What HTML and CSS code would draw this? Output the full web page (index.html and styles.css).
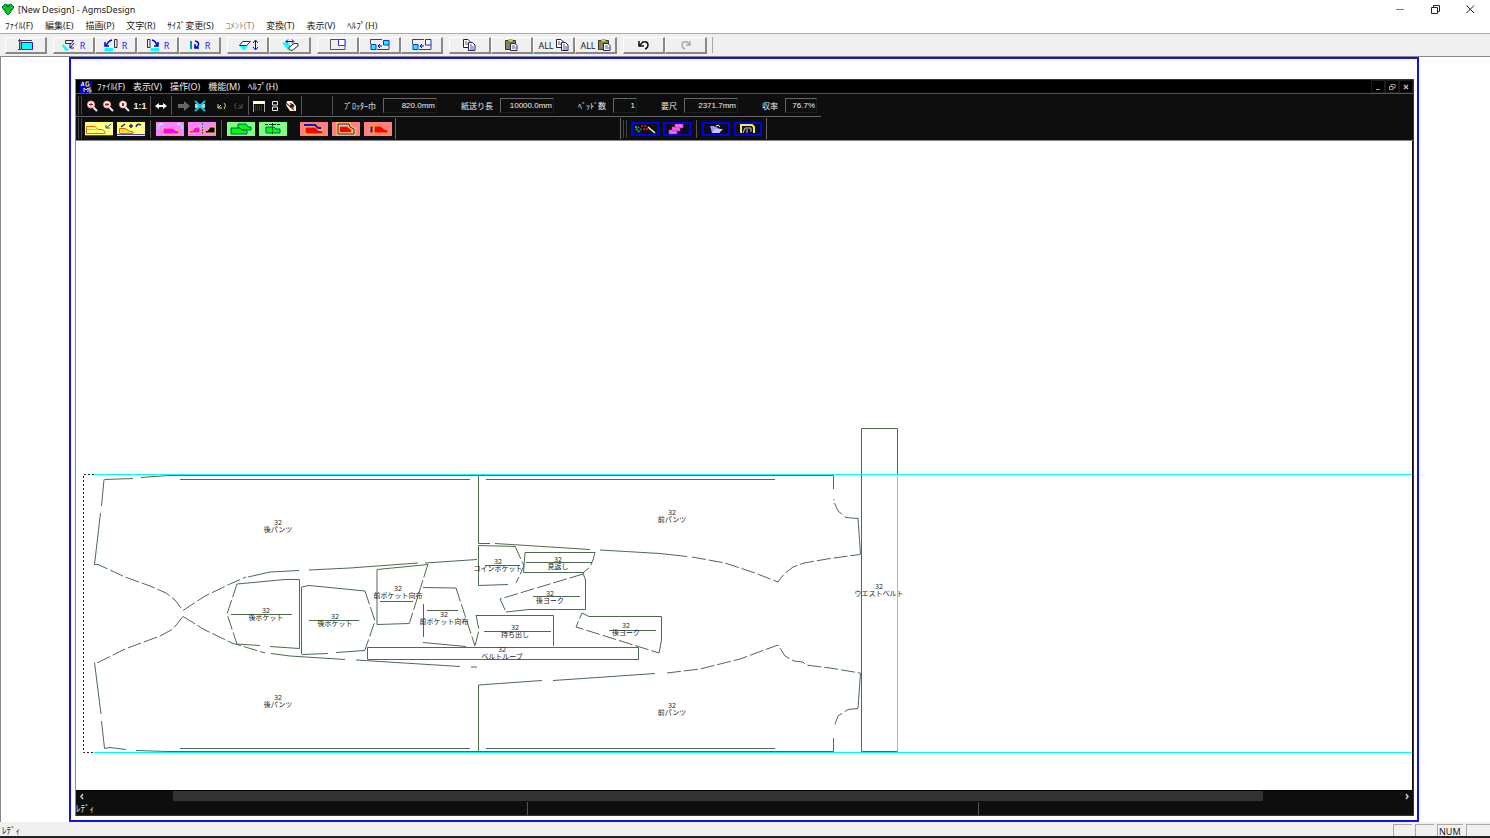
FILE: index.html
```
<!DOCTYPE html>
<html lang="ja">
<head>
  <meta charset="UTF-8" />
  <title>[New Design] - AgmsDesign</title>
  <link rel="stylesheet" href="styles.css">
</head>
<body>
  <header class="titlebar">
    <svg class="app-icon" width="12" height="12" viewBox="0 0 12 12"><path d="M3 1L5 2H7L9 1L12 4L10 7L9 6V9L6 12L3 9V6L2 7L0 4Z" fill="#0c2" stroke="#063" /><path d="M4 2L6 4L8 2" fill="none" stroke="#033" /></svg>
    <h1>[New Design] - AgmsDesign</h1>
    <div class="window-controls">
      <button aria-label="Minimize"><svg width="9" height="9"><path d="M0 4.500H8" stroke="#777" /></svg></button>
      <button aria-label="Restore"><svg width="9" height="9" fill="none" stroke="#222"><path d="M.5 2.500H6.500V8.500H.5ZM2.500 2V.5H8.500V6.500H7" /></svg></button>
      <button aria-label="Close"><svg width="9" height="9"><path d="M.5 .5L8 8M8 .5L.5 8" stroke="#222" /></svg></button>
    </div>
  </header>

  <nav class="menu">
    <button>ﾌｧｲﾙ(F)</button>
    <button>編集(E)</button>
    <button>描画(P)</button>
    <button>文字(R)</button>
    <button>ｻｲｽﾞ変更(S)</button>
    <button disabled>ｺﾒﾝﾄ(T)</button>
    <button>変換(T)</button>
    <button>表示(V)</button>
    <button>ﾍﾙﾌﾟ(H)</button>
  </nav>

  <div class="toolbar">
    <div class="group">
      <button aria-label="Select"><svg width="16" height="12"><path d="M3.500 3.500H14.500V10.500H3.500Z" fill="#0ff" stroke="#22a" /><path d="M1.500 0V11M0 1.500H14M3 1.500V10M0 10.500H3" fill="none" stroke="#444" /></svg></button>
    </div>
    <div class="group">
      <button aria-label="Rotate piece"><svg width="14" height="12"><path d="M3.500 1.500H11.500L9.500 4.500H3.500Z" fill="none" stroke="#333" /><path d="M1 5L7 11L4 12L0 7Z" fill="#0ff" /><path d="M12 4L8 9M8 5V9H12" fill="none" stroke="#00d" /></svg><span class="r">R</span></button>
      <button aria-label="Rotate left"><svg width="14" height="12"><path d="M10.500 .5H13V8.500H10.500Z" fill="none" stroke="#333" /><path d="M1 9H9V12H0Z" fill="#0ff" /><path d="M8 1Q4 2 2 7M1 3V7H5" fill="none" stroke="#00d" stroke-width="1.500" /></svg><span class="r">R</span></button>
      <button aria-label="Rotate right"><svg width="14" height="12"><path d="M1.500 .5H4V8.500H1.500Z" fill="none" stroke="#333" /><path d="M5 9H13V12H4Z" fill="#0ff" /><path d="M6 1Q10 2 11 7M8 7H12V3" fill="none" stroke="#00d" stroke-width="1.500" /></svg><span class="r">R</span></button>
      <button aria-label="Rotate 180"><svg width="12" height="12"><path d="M1 2H3V10H1Z" fill="#099" /><path d="M6 2Q11 3 9 7L6 9M6 5V9H10" fill="none" stroke="#00d" stroke-width="1.500" /></svg><span class="r">R</span></button>
    </div>
    <div class="group">
      <button aria-label="Flip vertical"><svg width="20" height="12"><path d="M1 6H10L7 11H5Z" fill="#0ff" /><path d="M4.500 2.500H12.500L8.500 6.500H1.500Z" fill="#fff" stroke="#333" /><path d="M17.500 2V10M15 4L17.500 1L20 4M15 8L17.500 11L20 8" fill="none" stroke="#00d" /></svg></button>
      <button aria-label="Flip horizontal"><svg width="18" height="12"><path d="M1 4L5 3L11 8L7 11Z" fill="#0ff" /><path d="M8 8.500L13 4.500H17V7L11 11.500L8 10.500Z" fill="#fff" stroke="#333" /><path d="M5 2.500H12M7 .5L5 2.500L7 4.500M11 .5L13 2.500L11 4.500" fill="none" stroke="#00d" /></svg></button>
    </div>
    <div class="group">
      <button aria-label="Zoom frame"><svg width="16" height="12" fill="none"><path d="M.5 .5H15V10.500H.5Z" stroke="#555" /><path d="M8.500 .5H15V6.500H8.500Z" stroke="#33e" fill="#fff" /></svg></button>
      <button aria-label="Move in"><svg width="20" height="12"><path d="M.5 .5H12M.5 .5V5M7 10.500H19V6" fill="none" stroke="#444" /><path d="M1 5.500H6V10.500H1Z" fill="#0ff" stroke="#22d" /><path d="M13.500 1.500H19V6H13.500Z" fill="#0ff" stroke="#22d" /><path d="M8 7H12M10 5L8 7L10 9" fill="none" stroke="#00d" /></svg></button>
      <button aria-label="Move out"><svg width="20" height="12"><path d="M.5 .5H12M.5 .5V5M7 10.500H19V6" fill="none" stroke="#444" /><path d="M1 5.500H6V10.500H1Z" fill="#0ff" stroke="#22d" /><path d="M13.500 .5H19V6H13.500Z" fill="#fff" stroke="#22d" /><path d="M8 7H12M10 5L8 7L10 9" fill="none" stroke="#00d" /></svg></button>
    </div>
    <svg width="0" height="0" class="defs">
      <symbol id="copy" viewBox="0 0 13 12"><path d="M.5 .5H5L7.500 3V8.500H.5Z" fill="#fff" stroke="#222" /><path d="M2 3H4M2 5H6" stroke="#555" /><path d="M5.500 3.500H9.500L12 6V11.500H5.500Z" fill="#fff" stroke="#226" /><path d="M7 6H9M7 8H11M7 10H11" stroke="#558" /></symbol>
      <symbol id="paste" viewBox="0 0 13 12"><path d="M.5 1.500H10.500V10.500H.5Z" fill="#885" stroke="#333" /><path d="M3 3V1H4L5.500 0L7 1H8V3Z" fill="#dd3" stroke="#444" stroke-width=".5" /><path d="M5.500 4.500H10L12 6.500V11.500H5.500Z" fill="#fff" stroke="#226" /><path d="M7 7H10M7 9H11" stroke="#558" /></symbol>
      <symbol id="lens" viewBox="0 0 12 12"><path d="M7 7L11 11" stroke="#eee" stroke-width="2" /><circle cx="5" cy="4.500" r="3.500" fill="#fff" stroke="#f99" /></symbol>
    </svg>
    <div class="group">
      <button aria-label="Copy"><svg width="13" height="12"><use href="#copy" /></svg></button>
      <button aria-label="Paste"><svg width="13" height="12"><use href="#paste" /></svg></button>
      <button><span>ALL</span><svg width="13" height="12"><use href="#copy" /></svg></button>
      <button><span>ALL</span><svg width="13" height="12"><use href="#paste" /></svg></button>
    </div>
    <div class="group">
      <button aria-label="Undo"><svg width="12" height="10"><path d="M1 1V6H6M1 6L5 2Q10 1 10 5Q10 8 7 9" fill="none" stroke="#111" stroke-width="1.500" /></svg></button>
      <button aria-label="Redo" disabled><svg width="12" height="10"><path d="M10 1V5H6M10 5L7 2Q2 1 2 5Q2 8 5 9" fill="none" stroke="#aaa" stroke-width="1.500" /></svg></button>
    </div>
  </div>

  <main class="workspace">
    <div class="frame">
      <section class="marker-window">
        <div class="marker-menu">
          <svg width="12" height="12" viewBox="0 0 12 12"><path d="M0 0H12V12H0Z" fill="#00c" /><path d="M1 5L3 1L4 5M1 4H4M9 1H6V5H9V3H8M4 11V7L6 9L8 7V11M11 7H9V9H11V11H9" fill="none" stroke="#fe4" /></svg>
          <nav class="menu">
            <button>ﾌｧｲﾙ(F)</button>
            <button>表示(V)</button>
            <button>操作(O)</button>
            <button>機能(M)</button>
            <button>ﾍﾙﾌﾟ(H)</button>
          </nav>
          <div class="mdi-controls">
            <button aria-label="Minimize"><svg width="8" height="8"><path d="M2 6.500H6" stroke="#a99" /></svg></button>
            <button aria-label="Restore"><svg width="8" height="8"><path d="M1.500 3.500H5V6.500H1.500ZM3 3V1.500H7V5H5" fill="none" stroke="#a99" /></svg></button>
            <button aria-label="Close"><svg width="8" height="8"><path d="M2 2L6 6M6 2L2 6" stroke="#caa" stroke-width="1.500" /></svg></button>
          </div>
        </div>

        <div class="view-bar">
          <span class="grip"></span>
          <div class="tools">
            <button aria-label="Zoom in"><svg width="12" height="12"><use href="#lens" /><path d="M3 4.500H7M5 2.500V6.500" stroke="#d00" /></svg></button>
            <button aria-label="Zoom out"><svg width="12" height="12"><use href="#lens" /><path d="M3 4.500H7" stroke="#d00" stroke-width="2" /></svg></button>
            <button aria-label="Zoom area"><svg width="12" height="12"><use href="#lens" /><path d="M4 3H6V6H4Z" fill="#d00" /></svg></button>
            <button class="ratio">1:1</button>
          </div>
          <span class="sep"></span>
          <div class="tools">
            <button aria-label="Fit width"><svg width="12" height="8"><path d="M0 4L4 1V3H8V1L12 4L8 7V5H4V7Z" fill="#fff" /></svg></button>
          </div>
          <span class="sep"></span>
          <div class="tools run">
            <button aria-label="Next"><svg width="12" height="10"><path d="M0 3H6V0L12 5L6 10V7H0Z" fill="#666" /></svg></button>
            <button aria-label="Delete"><svg width="12" height="12"><path d="M1 6H11" stroke="#ccc" stroke-width="4" /><path d="M1 1L11 11M11 1L1 11" stroke="#0cd" stroke-width="2" /></svg></button>
          </div>
          <div class="tools">
            <button aria-label="Undo move"><svg width="10" height="8"><path d="M1 2V6H5M1 6L4 3M7 1Q10 3 7 7" fill="none" stroke="#dd7" /></svg></button>
            <button aria-label="Redo move" disabled><svg width="10" height="8"><path d="M9 2V6H5M9 6L6 3M3 1Q0 3 3 7" fill="none" stroke="#555" /></svg></button>
          </div>
          <span class="sep"></span>
          <div class="tools">
            <button aria-label="Window"><svg width="12" height="12"><path d="M.5 2V12M11.500 2V12" stroke="#aaa" /><path d="M0 1H12V4H0Z" fill="#ffc" /><path d="M2 6H10M2 8H10M2 10H10" stroke="#555" stroke-dasharray="1 1" /></svg></button>
            <button aria-label="Split"><svg width="8" height="12"><path d="M1.500 1.500H6.500V5H1.500ZM1.500 7H6.500V10.500H1.500Z" fill="none" stroke="#eee" /></svg></button>
            <button aria-label="Pan"><svg width="12" height="12"><path d="M2 1H7L11 6V11H5L1 5Z" fill="#ffd" /><path d="M1 3L9 10M5 3L9 6" stroke="#a32" stroke-width="1.500" /><circle cx="7" cy="6" r="2" fill="#222" /></svg></button>
          </div>
          <span class="sep"></span>
          <div class="readouts">
            <label for="plotter">ﾌﾟﾛｯﾀｰ巾</label><input id="plotter" class="w54" value="820.0mm" readonly>
            <label for="feed">紙送り長</label><input id="feed" class="w54" value="10000.0mm" readonly>
            <label for="beds">ﾍﾞｯﾄﾞ数</label><input id="beds" class="w24" value="1" readonly>
            <label for="length">要尺</label><input id="length" class="w54" value="2371.7mm" readonly>
            <label for="yield">収率</label><input id="yield" class="w32" value="76.7%" readonly>
          </div>
        </div>

        <div class="piece-bar">
          <span class="grip"></span>
          <div class="pieces left">
            <button class="yellow" aria-label="Place piece"><svg width="28" height="14" fill="none"><path d="M1.500 11.500V4.500H10L13 7.500H17L20 9.500V11.500Z" stroke="#e60" /><path d="M2 7.500H12" stroke="#fb0" /><path d="M0 13.500H28" stroke="#44c" /><path d="M26 2L21 6M21 3V6H25" stroke="#24c" /></svg></button>
            <button class="yellow" aria-label="Add piece"><svg width="28" height="14" fill="none"><path d="M2.500 11.500V6.500H8L12 9L16 10V11.500Z" stroke="#e60" fill="#fd3" /><path d="M0 12.500H28" stroke="#44c" /><path d="M8 2L4 5M12 4H16M14 2V6M24 3Q20 1 19 5" stroke="#228" stroke-width="1.500" /></svg></button>
            <span class="sep"></span>
            <button class="pink" aria-label="Rotate piece"><svg width="28" height="14"><path d="M7 12V6H17L19 8L23 9V12Z" fill="#f0f" stroke="#fc4" /><path d="M7 2Q2 2 2 7M21 2Q27 2 26 7M4 1L7 3M24 1L21 3" fill="none" stroke="#9ef" stroke-width="1.500" /></svg></button>
            <button class="pink" aria-label="Mirror piece"><svg width="28" height="14"><path d="M1 11V9L5 8L7 5H12V11Z" fill="#f0f" stroke="#fc4" /><path d="M17 11V9L20 8L22 5H27V11Z" fill="#000" stroke="#fc4" /><path d="M14.500 1V13" stroke="#555" stroke-dasharray="2 1" /><path d="M9 4H18M16 2L18 4L16 6" fill="none" stroke="#9bf" /></svg></button>
            <span class="sep"></span>
            <button class="green" aria-label="Overlap"><svg width="28" height="14" fill="#0f0" stroke="#157"><path d="M11 8V2H19L21 5H24V8Z" /><path d="M4 12V6H13L15 8H20V12Z" /></svg></button>
            <button class="green" aria-label="Split piece"><svg width="28" height="14"><path d="M7 11V5H15L17 7H21V11Z" fill="#0f0" stroke="#157" /><path d="M13.500 1V13M6 2.500H21" stroke="#132" stroke-dasharray="3 1" /></svg></button>
            <span class="space"></span>
            <button class="red" aria-label="Align top"><svg width="28" height="14"><path d="M5 12V5H15L18 8L23 9V12Z" fill="#f00" stroke="#fc2" /><path d="M4 3H15L18 6H21" fill="none" stroke="#11c" stroke-width="2" /></svg></button>
            <button class="red" aria-label="Outline"><svg width="28" height="14"><path d="M6 2H17L18 5L22 7V12H6Z" fill="none" stroke="#fd2" stroke-width="3" /><path d="M6 2H17L18 5L22 7V12H6Z" fill="none" stroke="#11c" /><path d="M8 10V5H15L19 8V10Z" fill="#f00" /></svg></button>
            <button class="red" aria-label="Align left"><svg width="28" height="14"><path d="M10 11V4H17L20 7L24 8V11Z" fill="#f00" stroke="#fa2" /><path d="M6 4H9V11H6Z" fill="#11c" stroke="#fa2" /></svg></button>
          </div>
          <div class="pieces right">
            <span class="grip"></span>
            <button class="blue" aria-label="Auto place"><svg width="24" height="10"><path d="M3 6L6 3M5 8L8 5M2 3H4" stroke="#299" stroke-width="2" stroke-dasharray="2 1" /><path d="M8 2H14M10 5H15" stroke="#c12" stroke-width="2" stroke-dasharray="2 1" /><path d="M15 3L22 9" stroke="#ffa" stroke-width="1.500" /></svg></button>
            <button class="blue" aria-label="Stack"><svg width="24" height="10" fill="#f6e" stroke="#b3b" stroke-width=".5"><path d="M10 0H18V4H10ZM7 3H15V7H7ZM4 6H12V10H4Z" /></svg></button>
            <span class="sep"></span>
            <button class="blue" aria-label="Open"><svg width="24" height="10"><path d="M6 2H10L16 5V9H8Z" fill="#99f" /><path d="M8 9L11 5H19L15 9Z" fill="#ccf" /><path d="M12 2Q15 0 16 3" fill="none" stroke="#fff" /></svg></button>
            <button class="blue" aria-label="Plot"><svg width="24" height="10"><path d="M5 9V1H16L18 3V9" fill="none" stroke="#ee4" stroke-width="2" /><path d="M7 9L9 4H15V8M11 5V9" fill="none" stroke="#ccc" /></svg></button>
          </div>
        </div>

        <div class="canvas">
          <svg class="drawing" width="100%" height="100%">
            <g transform="translate(-76 -141)">
              <g class="outline">
                <!-- back pants, upper -->
                <path d="M104.500 479.500L133 478.500M141 477.500L168 475.500H478M180 479.500H470M104 479.500L101.500 506M100.500 513L94.500 564.500" />
                <path class="dash" d="M94.500 564.500H98L110 570L125 577L150 586L166 593L175 600L183 610.500L205 596L230 584L246 577" />
                <path d="M248 577L270 572L299 570.500M309 570L350 568L418 563M425 563L477 559.500" />
                <!-- back pants, lower -->
                <path class="dash" d="M183 616.500L173 629L160 636L125 649L98 662.500H94.500M183 616.500L205 630L232 643L265 653" />
                <path d="M94.500 662.500L101 714M101.500 721L104.500 748.500L110 747.500L126 749.500M136 750.500L168 751.500H478M180 748.500H470M271 653.500L290 656L345 659.500M356 660L460 666.500M471 667H477" />
                <!-- front pants, upper -->
                <path d="M478.500 475V543.500H490M478 475.500H833.500V489M486 479.500H775M495 543.500L590 549.500M600 550L660 553.500L687 556.500M860.500 554.500L858 518" />
                <path class="dash" d="M692 557L725 563L755 573L778 582L784 574L793 567L804 563L830 558.500L860 554.500M858 518.500L846 517.500L838 511L834 502V499" />
                <!-- front pants, lower -->
                <path d="M478.500 751V685L542 680.500M553 680.500L590 678L655 673.500M478 751.500H833.500V738M486 748.500H775M860.500 673L858 708" />
                <path class="dash" d="M667 673L700 669L740 659L778 645L785 656L794 661L803 662L806 665L830 668L860 673M858 708.500L848 709.500L838 716L834 727" />
                <!-- waist belt -->
                <path d="M897.500 474V428.500H861.500V751.500H897" />
                <!-- back pockets -->
                <path d="M237 584L285 579.500H299.500V648.500L270 646.500M260 645.500L237 644M231 614.500H292M301.500 654V587L309 585.500L365 591M302 654.500L328 653.500M336 652.500L365 650.500M309 620.500H359" />
                <path class="dash" d="M237 584L227 614L237 644M365 591L375 621L365 650" />
                <!-- front pocket facings -->
                <path d="M428 564.500L377 569.500V624.500L409.500 623.500M380 601.500H413M423 587.500L456 588M423.500 604V637M423 642.500L466 646.500M427 610.500H458" />
                <path class="dash" d="M428 564L409.500 623M456 588L475 646" />
                <!-- coin pocket, fly facing -->
                <path d="M508 584.500L478.500 585.500V545.500L515 546.500M485 565.500H520M595 552.500H525L523.500 572.500H584M526 562.500H592" />
                <path class="dash" d="M515 546L524 566L516 583M595 552L593 560L590 567L584 572" />
                <!-- yokes -->
                <path d="M583 573L585.500 580V609.500H529L506 612M533 596.500H580M589 616.500H661.500V640L659 653M609 630.500H656" />
                <path class="dash" d="M583 574L500 599L506 612M589 616.500L582 613L576 627L659 653" />
                <!-- fly extension, belt loops -->
                <path d="M476 615.500H553.500V646M484 631.500H551M367.500 647.500H638.500V659.500H367.500Z" />
                <path class="dash" d="M476 615L479 630L475 646" />
              </g>
              <path class="edge" d="M94 474.500H83.500V752.500H94" />
              <g class="labels">
                <text x="278" y="525">32</text><text x="278" y="532">後パンツ</text>
                <text x="278" y="700">32</text><text x="278" y="707">後パンツ</text>
                <text x="672" y="515">32</text><text x="672" y="522">前パンツ</text>
                <text x="672" y="708">32</text><text x="672" y="715">前パンツ</text>
                <text x="879" y="589">32</text><text x="879" y="596">ウエストベルト</text>
                <text x="266" y="613">32</text><text x="266" y="620">後ポケット</text>
                <text x="335" y="619">32</text><text x="335" y="626">後ポケット</text>
                <text x="398" y="591">32</text><text x="398" y="598">前ポケット向布</text>
                <text x="444" y="617">32</text><text x="444" y="624">前ポケット向布</text>
                <text x="498" y="564">32</text><text x="498" y="571">コインポケット</text>
                <text x="558" y="562">32</text><text x="558" y="569">見返し</text>
                <text x="550" y="596">32</text><text x="550" y="603">後ヨーク</text>
                <text x="626" y="628">32</text><text x="626" y="635">後ヨーク</text>
                <text x="515" y="630">32</text><text x="515" y="637">持ち出し</text>
                <text x="502" y="652">32</text><text x="502" y="659">ベルトループ</text>
              </g>
            </g>
            <g class="limit">
              <rect x="18" y="333" width="100%" height="1" />
              <rect x="18" y="611" width="100%" height="1" />
              <rect x="821" y="334" width="1" height="277" />
            </g>
          </svg>
        </div>

        <div class="scrollbar">
          <button aria-label="Scroll left"><svg width="6" height="7"><path d="M4 1L2 3.500L4 6" fill="none" stroke="#ccc" stroke-width="1.500" /></svg></button>
          <div class="track"><div class="thumb"></div></div>
          <button aria-label="Scroll right"><svg width="6" height="7"><path d="M2 1L4 3.500L2 6" fill="none" stroke="#ccc" stroke-width="1.500" /></svg></button>
        </div>
        <div class="marker-status"><span>ﾚﾃﾞｨ</span><span></span><span></span></div>
      </section>
    </div>
  </main>

  <footer class="statusbar">
    <span class="ready">ﾚﾃﾞｨ</span>
    <span class="cell"></span>
    <span class="cell"></span>
    <span class="cell num">NUM</span>
    <span class="cell"></span>
  </footer>
</body>
</html>
```
FILE: styles.css
```
* {
  box-sizing: border-box;
}
body {
  margin: 0;
  min-height: 100vh;
  display: flex;
  flex-direction: column;
  background: #fff;
  color: #222;
  font-family: "Noto Sans", "Noto Sans CJK JP", sans-serif;
  font-size: 9px;
  border-bottom: 2px solid #222;
}
button {
  display: flex;
  align-items: center;
  justify-content: center;
  padding: 0;
  border: none;
  background: none;
  color: inherit;
  font: inherit;
  white-space: nowrap;
}
svg {
  display: block;
  flex: none;
}
.defs {
  position: absolute;
}

.titlebar {
  display: flex;
  align-items: center;
  height: 18px;
  padding: 0 15px 0 2px;
  gap: 4px;
}
.titlebar h1 {
  margin: 0;
  font-size: 9px;
  font-weight: normal;
}
.window-controls {
  display: flex;
  gap: 26px;
  margin-left: auto;
}

.menu {
  display: flex;
  gap: 12px;
  height: 15px;
  padding-left: 5px;
}
.menu button:disabled {
  color: #888;
}

.toolbar {
  display: flex;
  gap: 6px;
  height: 24px;
  padding: 3px 5px;
  background: #f0f0f0;
  border-top: 1px solid #aaa;
  border-bottom: 1px solid #888;
}
.group {
  display: flex;
}
.group:last-child {
  padding-right: 5px;
  border-right: 1px solid #aaa;
}
.group button {
  width: 42px;
  height: 17px;
  gap: 2px;
  border: 1px solid #fff;
  border-right: 2px solid #888;
  border-bottom: 2px solid #888;
}
.group .r {
  color: #22e;
  margin-left: 2px;
}

.workspace {
  flex: 1;
  display: flex;
  padding: 0 71px 0 68px;
  border-left: 1px solid #888;
}
.frame {
  flex: 1;
  display: flex;
  padding: 20px 3px 4px 4px;
  border: 2px solid #1111e8;
}
.marker-window {
  flex: 1;
  display: flex;
  flex-direction: column;
  background: #0e0e0e;
  color: #eee;
  border: 1px solid #333;
  border-left-color: #888;
}
.marker-menu {
  display: flex;
  align-items: center;
  height: 13px;
  padding-left: 4px;
  background: #000;
}
.marker-menu .menu {
  gap: 8px;
}
.mdi-controls {
  display: flex;
  margin-left: auto;
}
.mdi-controls button {
  width: 14px;
  height: 13px;
  border: 1px solid #1c1c1c;
}

.grip {
  flex: none;
  width: 4px;
  border: 1px solid #444;
  border-width: 0 1px;
}
.sep {
  flex: none;
  width: 1px;
  background: #555;
}
.view-bar {
  display: flex;
  align-items: stretch;
  height: 24px;
  padding: 2px 0 2px 2px;
  border-top: 1px solid #555;
  background: linear-gradient(#666, #666) left bottom / 745px 1px no-repeat;
}
.tools {
  display: flex;
  align-items: center;
  padding: 0 2px;
}
.tools button {
  width: 16px;
  height: 16px;
}
.tools.run {
  padding-left: 4px;
  padding-right: 4px;
}
.tools .ratio {
  font-family: "Liberation Sans", sans-serif;
  font-weight: bold;
}
.readouts {
  display: flex;
  align-items: center;
  margin-left: 30px;
  padding-left: 11px;
  border-left: 1px solid #555;
}
.readouts label {
  flex: none;
  margin-right: 7px;
  font-size: 8px;
}
.readouts input {
  height: 15px;
  margin-right: 24px;
  padding: 0 1px;
  border: 1px solid #1c1c1c;
  border-top-color: #666;
  border-left-color: #666;
  background: #0e0e0e;
  color: #eee;
  font-family: "Liberation Sans", sans-serif;
  font-size: 8px;
  text-align: right;
}
.readouts .w54 {
  width: 54px;
}
.readouts .w24 {
  width: 24px;
}
.readouts .w32 {
  width: 32px;
  margin-right: 0;
}

.piece-bar {
  display: flex;
  height: 24px;
  padding: 1px 0 1px 2px;
  border-bottom: 1px solid #888;
}
.pieces {
  display: flex;
  align-items: center;
  gap: 4px;
  border-right: 1px solid #666;
}
.pieces .sep,
.pieces .grip {
  height: 18px;
}
.pieces .sep {
  margin: 0 1px;
}
.pieces.left {
  width: 314px;
  padding-left: 3px;
}
.pieces.right {
  margin-left: 224px;
  width: 147px;
  padding-left: 2px;
  border-left: 1px solid #666;
}
.space {
  width: 5px;
}
.pieces button {
  width: 28px;
  height: 14px;
}
.yellow {
  background: #ffff80;
}
.pink {
  background: #ff80ff;
}
.green {
  background: #80ff80;
}
.red {
  background: #ff8080;
}
.pieces .blue {
  border: 2px solid #00e;
}

.canvas {
  flex: 1;
  display: flex;
  margin-right: 1px;
  background: #fff;
}
.drawing {
  flex: 1;
  overflow: hidden;
}
.outline {
  fill: none;
  stroke: #4a6b4e;
}
.outline .dash {
  stroke-dasharray: 14 3;
}
.edge {
  fill: none;
  stroke: #222;
  stroke-dasharray: 2 2;
}
.limit {
  fill: #0ff;
}
.labels {
  fill: #222;
  font-size: 7px;
  text-anchor: middle;
}

.scrollbar {
  display: flex;
  height: 12px;
  border-top: 1px solid #000;
}
.scrollbar button {
  width: 12px;
}
.track {
  flex: 1;
}
.thumb {
  height: 10px;
  margin: 0 10.5% 0 6.5%;
  background: #333;
}
.marker-status {
  display: grid;
  grid-template-columns: 27fr 27fr 26fr;
  height: 13px;
  padding-bottom: 2px;
  line-height: 13px;
}
.marker-status span + span {
  border-left: 1px solid #555;
}

.statusbar {
  display: flex;
  gap: 3px;
  height: 14px;
  padding-top: 2px;
  line-height: 13px;
  background: #f0f0f0;
}
.ready {
  flex: 1;
  padding-left: 2px;
}
.cell {
  width: 19px;
  border: 1px solid #aaa;
  border-width: 1px 0 0 1px;
}
.num {
  width: 26px;
  padding-left: 1px;
}
.cell:last-child {
  width: 24px;
}
```
